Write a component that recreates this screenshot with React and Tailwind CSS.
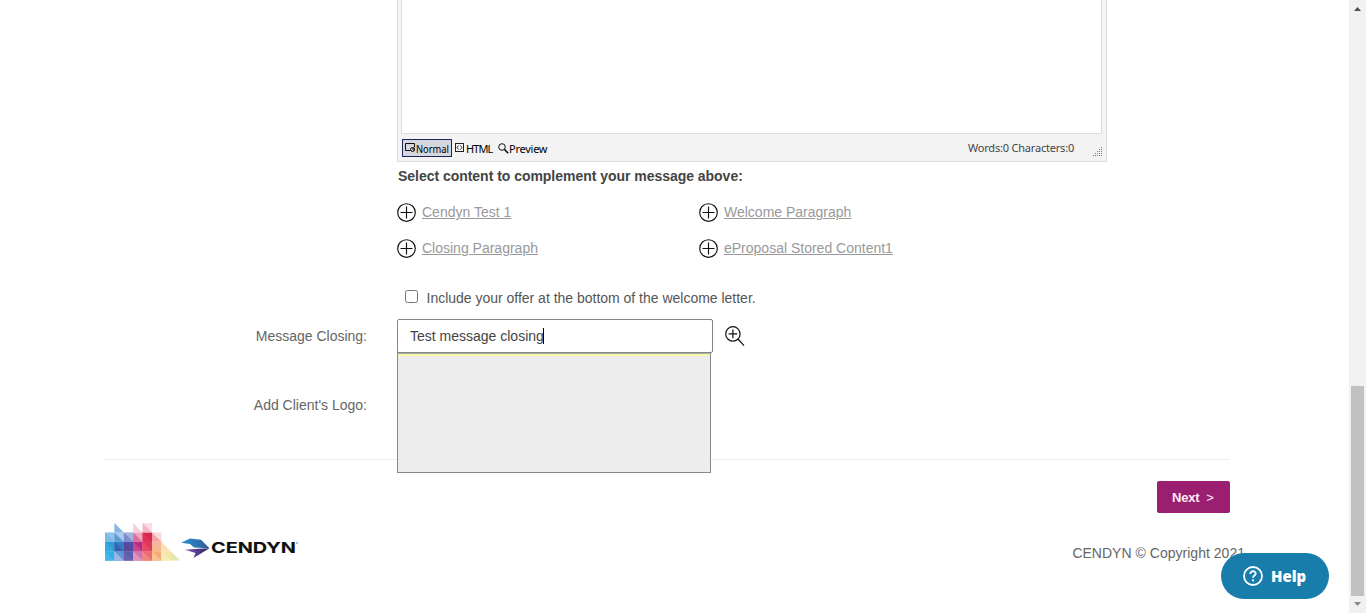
import React from "react";

function PlusCircle() {
  return (
    <svg width="19" height="19" viewBox="0 0 19 19" className="shrink-0" fill="none" stroke="#111" strokeWidth="1.15">
      <circle cx="9.5" cy="9.5" r="8.8" />
      <path d="M9.5 3.5v12M3.5 9.5h12" />
    </svg>
  );
}

function ContentLink({ children }) {
  return (
    <div className="flex h-9 w-[302px] items-center gap-[6px]">
      <PlusCircle />
      <a className="text-[14px] leading-5 text-[#999] underline">{children}</a>
    </div>
  );
}

function EditorFooter() {
  return (
    <div className="flex h-[27px] items-center pt-px pl-px text-[11px] text-black">
      <div className="flex h-[18px] w-[50px] shrink-0 items-center border border-[#1c2460] bg-[#d4d7de] pl-[2px]">
        <svg width="11" height="12" viewBox="0 0 11 12" className="shrink-0" fill="none" stroke="#111">
          <path d="M5.5 8.5h-5v-7h9v4" />
          <circle cx="7.5" cy="7.5" r="2" />
          <path d="M7 7h1M9 6v3" />
        </svg>
        <svg width="35" height="16" viewBox="0 0 35 16" className="shrink-0">
          <text x="0" y="13" fontFamily="Noto Sans, sans-serif" fontSize="11" textLength="33" lengthAdjust="spacingAndGlyphs">Normal</text>
        </svg>
      </div>
      <div className="ml-[3px] flex w-[43px] items-center gap-[2px]">
        <svg width="9" height="10" viewBox="0 0 9 10" className="shrink-0" fill="none" stroke="#222">
          <rect x=".5" y=".5" width="8" height="8" />
          <path d="M3.5 2.5l-1.5 2 1.5 2M5.5 2.5l1.5 2-1.5 2" strokeWidth=".9" />
        </svg>
        <span className="pt-[2px] font-['Noto_Sans',sans-serif] leading-4 tracking-[-0.9px]">HTML</span>
      </div>
      <div className="flex items-center">
        <svg width="11" height="11" viewBox="0 0 11 11" className="shrink-0" fill="none" stroke="#111">
          <circle cx="4" cy="4" r="3.3" />
          <path d="M6.4 6.4l3.8 3.8" strokeWidth="1.6" />
        </svg>
        <span className="pt-[2px] font-['Noto_Sans',sans-serif] leading-4 tracking-[-0.25px]">Preview</span>
      </div>
      <span className="ml-auto pr-[29px] font-['Noto_Sans',sans-serif] tracking-[-0.2px] text-[#444]">Words:0 Characters:0</span>
    </div>
  );
}

const cells = [
  [4, 0, "#fbdde4"],
  [0, 1, "#8fc4ea"], [1, 1, "#a9cdee"], [2, 1, "#a3b4df"], [3, 1, "#eda6bf"], [4, 1, "#d52850"], [5, 1, "#fbdcdc"],
  [0, 2, "#2b9fdc"], [1, 2, "#2f7fc6"], [2, 2, "#554ba0"], [3, 2, "#b42d82"], [4, 2, "#e0395c"], [5, 2, "#f7b5a0"],
  [0, 3, "#2fb0e6"], [1, 3, "#5f97d4"], [2, 3, "#5a5fb0"], [3, 3, "#cf74ab"], [4, 3, "#ee6a72"], [5, 3, "#f6ab77"], [6, 3, "#f9e6a4"],
];
const wedges = [
  [1, 0, "#86b6e2"], [3, 0, "#f8cfdd"], [4, 0, "#f5b5c5"], [5, 1, "#f5a3a5"], [6, 2, "#f9e3b0"], [7, 3, "#e2e8ae"],
  [0, 1, "#7ab9e6"], [1, 1, "#5f9ad4"], [2, 1, "#7d8dcb"], [3, 1, "#de6f9d"], [4, 1, "#dd3358"],
  [0, 2, "#3ba9e0"], [1, 2, "#3d5fb2"], [2, 2, "#5d479c"], [3, 2, "#c94490"], [4, 2, "#e64a66"], [5, 2, "#f6ba8a"],
  [0, 3, "#48b7e7"], [1, 3, "#9db6e2"], [2, 3, "#6b62b0"], [3, 3, "#e293bb"], [4, 3, "#f0857d"], [5, 3, "#fac491"], [6, 3, "#f1efb5"],
];

function CendynLogo() {
  return (
    <div className="flex h-[38px] w-[195px] items-start">
      <svg width="76" height="38" viewBox="0 0 76 38" className="shrink-0">
        {cells.map(([x, y, fill]) => (
          <rect key={`c${x}-${y}`} x={x * 9.4} y={y * 9.4} width="9.5" height="9.5" fill={fill} />
        ))}
        {wedges.map(([x, y, fill]) => (
          <polygon key={`w${x}-${y}`} points={`${x * 9.4},${y * 9.4} ${x * 9.4},${(y + 1) * 9.4} ${(x + 1) * 9.4},${(y + 1) * 9.4}`} fill={fill} />
        ))}
      </svg>
      <svg width="120" height="38" viewBox="0 0 120 38" className="shrink-0">
        <defs>
          <linearGradient id="wing" x1="0" x2="1">
            <stop offset="0" stopColor="#2a93d3" />
            <stop offset="1" stopColor="#2f5a98" />
          </linearGradient>
          <linearGradient id="tail" x1="0" x2="1">
            <stop offset="0" stopColor="#8155b7" />
            <stop offset="1" stopColor="#29245e" />
          </linearGradient>
        </defs>
        <path d="M0 19.8L9 15.5l11 1.3L28.5 25.2 13 24.6 9 21z" fill="url(#wing)" />
        <path d="M4 26.8l13-1 11.5-.6L12.5 35l2-5z" fill="url(#tail)" />
        <text x="30" y="30" fill="#111" stroke="#111" strokeWidth=".1" fontFamily="Inter, sans-serif" fontSize="14.5" fontWeight="700" textLength="85" lengthAdjust="spacingAndGlyphs">CENDYN</text>
        <circle cx="116" cy="20" r=".7" fill="#444" />
      </svg>
    </div>
  );
}

function Scrollbar() {
  return (
    <div className="flex h-[613px] w-[17px] shrink-0 flex-col items-center bg-[#f1f1f1]">
      <svg width="17" height="17" viewBox="0 0 17 17"><path d="M5 11h7L8.5 7z" fill="#505050" /></svg>
      <div className="mt-[369px] h-[210px] w-[13px] bg-[#c1c1c1]" />
      <svg width="17" height="17" viewBox="0 0 17 17"><path d="M5 6h7l-3.5 4z" fill="#888" /></svg>
    </div>
  );
}

export default function App() {
  return (
    <div className="relative flex h-[613px] w-[1366px] overflow-hidden bg-white font-['Liberation_Sans',Arial,sans-serif] text-[14px] text-[#666]">
      <main className="h-full w-[1349px]">
        <section className="relative ml-[397px] h-[162px] w-[710px] border-x border-b border-[#ddd] bg-[#f3f3f3] px-[3px]">
          <div className="mr-px h-[134px] border-x border-b border-[#ddd] bg-white" />
          <EditorFooter />
          <svg width="9" height="9" viewBox="0 0 9 9" className="absolute right-[4px] bottom-[5px]" fill="#3d8fdc">
            {[0, 1, 2, 3, 4].map((r) =>
              Array.from({ length: r + 1 }, (_, i) => <rect key={`${r}-${i}`} x={8 - i * 2} y={r * 2} width="1" height="1" />)
            )}
          </svg>
        </section>
        <section className="ml-[397px] w-[710px]">
          <h2 className="flex h-[28px] items-center pl-px font-bold tracking-[-0.03px] text-[#444]">Select content to complement your message above:</h2>
          <div className="mt-1 flex flex-wrap">
            <ContentLink>Cendyn Test 1</ContentLink>
            <ContentLink>Welcome Paragraph</ContentLink>
            <ContentLink>Closing Paragraph</ContentLink>
            <ContentLink>eProposal Stored Content1</ContentLink>
          </div>
          <label className="mt-[22px] flex h-5 items-center pl-2 tracking-[-0.01px] text-[#555]">
            <span className="mr-[8.5px] mb-[3px] h-[13px] w-[13px] rounded-[2.5px] border border-[#767676] bg-white" />
            Include your offer at the bottom of the welcome letter.
          </label>
        </section>
        <section className="mt-[11px] flex h-[34px] items-center">
          <span className="w-[367px] text-right">Message Closing:</span>
          <div className="relative ml-[30px] flex h-[34px] w-[316px] items-center rounded-[2px] border border-[#858585] pl-3 text-[#444]">
            Test message closing<span className="-ml-px h-4 w-px bg-black" />
            <div className="absolute top-[32px] -left-px h-[121px] w-[314px] border border-[#888] bg-[#ededed]">
              <div className="h-[3px] border-t border-[#aaa] bg-[#f8f8a5]" />
            </div>
          </div>
          <svg width="20" height="21" viewBox="0 0 20 21" className="ml-3" fill="none" stroke="#111" strokeWidth="1.2">
            <circle cx="7.9" cy="7.9" r="7.2" />
            <path d="M7.9 3.6v8.6M3.6 7.9h8.6M13 13l6 6.7" />
          </svg>
        </section>
        <section className="flex h-[106px] w-[367px] items-center justify-end pb-[2px]">Add Client&apos;s Logo:</section>
        <div className="ml-[105px] flex w-[1125px] justify-end border-t border-[#eee] pt-[21px]">
          <div className="h-8 w-[73px] rounded-[2px] bg-[#9b1f70] pt-px pl-[15px] text-[13px] leading-8 font-bold tracking-[-0.2px] text-[#fbeaf5]">
            Next&nbsp; <span className="font-normal">&gt;</span>
          </div>
        </div>
        <footer className="mt-[10px] ml-[105px] flex w-[1140px] justify-between">
          <CendynLogo />
          <span className="mt-[20px] leading-5 tracking-[0.02px] whitespace-nowrap">CENDYN © Copyright 2021</span>
        </footer>
      </main>
      <Scrollbar />
      <div className="absolute top-[553px] left-[1221px] flex h-[46px] w-[108px] items-center rounded-full bg-[#197dab] pl-[22px] text-white">
        <svg width="20" height="20" viewBox="0 0 20 20" fill="none" stroke="white" strokeWidth="1.8">
          <circle cx="10" cy="10" r="9" />
          <path d="M7.3 8c0-3.8 5.6-3.4 5.4-.3-.1 1.8-2.7 1.9-2.7 4" />
          <circle cx="10" cy="14.4" r="1.1" fill="white" stroke="none" />
        </svg>
        <span className="ml-2 pt-px font-['Open_Sans',sans-serif] text-[15px] font-extrabold">Help</span>
      </div>
    </div>
  );
}
